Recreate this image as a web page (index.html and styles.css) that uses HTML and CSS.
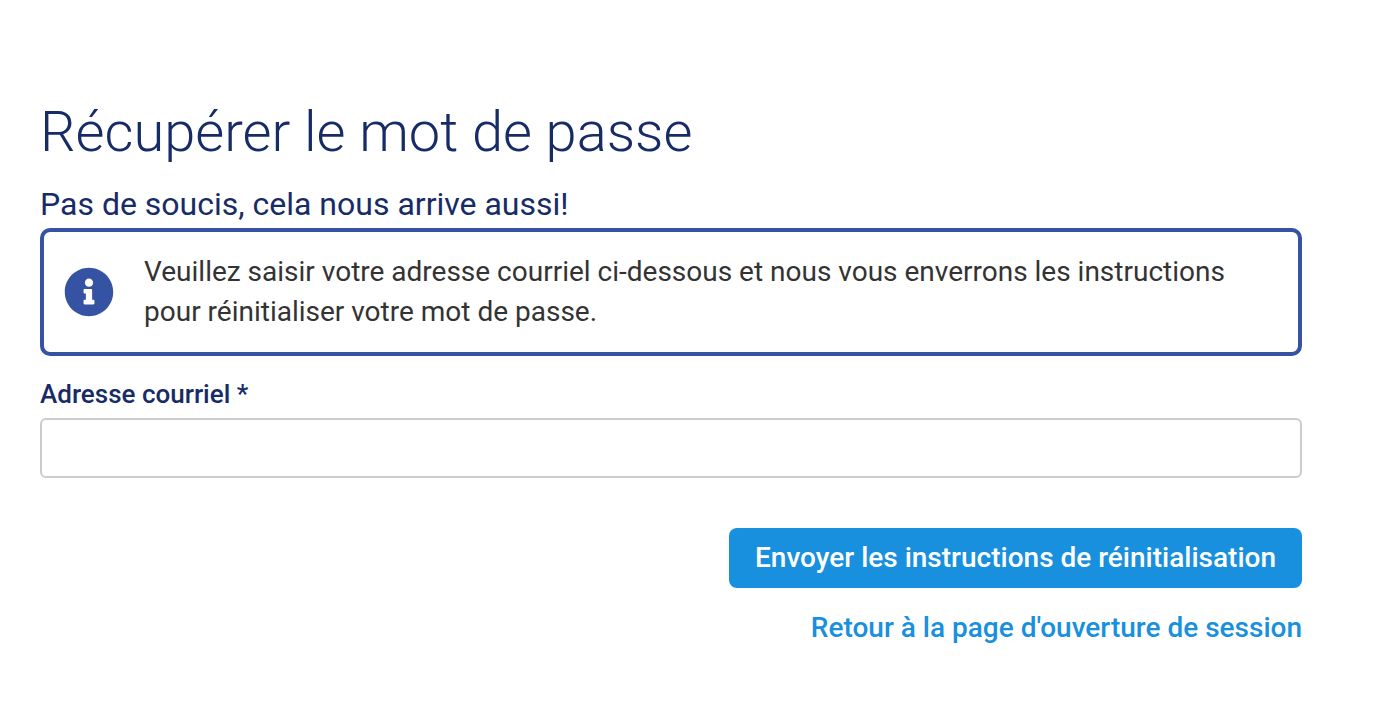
FILE: index.html
```html
<!DOCTYPE html>
<html lang="fr">
<head>
    <meta charset="UTF-8">
    <meta name="viewport" content="width=device-width, initial-scale=1.0">
    <title>Récupérer le mot de passe</title>
    <link rel="stylesheet" href="styles.css">
</head>
<body>

    <main class="container">
        <h1>Récupérer le mot de passe</h1>
        <h2>Pas de soucis, cela nous arrive aussi!</h2>

        <div class="info-box">
            <svg class="info-icon" viewBox="0 0 512 512" aria-hidden="true">
                <path fill="currentColor" d="M256 8C119 8 8 119 8 256s111 248 248 248 248-111 248-248S393 8 256 8zm0 110c23 0 42 19 42 42s-19 42-42 42-42-19-42-42 19-42 42-42zm56 254c0 7-5 12-12 12h-88c-7 0-12-5-12-12v-24c0-7 5-12 12-12h12v-64h-12c-7 0-12-5-12-12v-24c0-7 5-12 12-12h64c7 0 12 5 12 12v100h12c7 0 12 5 12 12v24z"/>
            </svg>
            <p>Veuillez saisir votre adresse courriel ci-dessous et nous vous enverrons les instructions pour réinitialiser votre mot de passe.</p>
        </div>

        <form class="recovery-form">
            <label for="email">Adresse courriel *</label>
            <input type="email" id="email" name="email" required>
            <button type="submit">Envoyer les instructions de réinitialisation</button>
            <a href="#">Retour à la page d'ouverture de session</a>
        </form>
    </main>

</body>
</html>
```
FILE: styles.css
```css
* {
    box-sizing: border-box;
}

body {
    font-family: Roboto, sans-serif;
    background: #fff;
    color: #333;
    margin: 0;
}

.container {
    padding: 96px 72px 72px 40px;
}

h1 {
    font-size: 56px;
    font-weight: 300;
    line-height: 72px;
    color: #172b66;
    margin: 0 0 16px;
}

h2 {
    font-size: 32px;
    font-weight: 400;
    line-height: 40px;
    color: #172b66;
    margin: 0 0 4px;
}

.info-box {
    display: flex;
    align-items: center;
    gap: 30px;
    padding: 20px 64px 20px 20px;
    border: 4px solid #3653a3;
    border-radius: 10px;
}

.info-icon {
    flex: none;
    width: 50px;
    height: 50px;
    color: #3653a3;
}

.info-box p {
    font-size: 28px;
    line-height: 40px;
    margin: 0;
}

.recovery-form {
    display: flex;
    flex-direction: column;
    align-items: flex-end;
}

label {
    align-self: flex-start;
    font-size: 26px;
    font-weight: 500;
    line-height: 32px;
    color: #172b66;
    margin: 22px 0 8px;
}

input {
    width: 100%;
    height: 60px;
    padding: 8px 16px;
    font-family: inherit;
    font-size: 28px;
    color: #333;
    background: #fff;
    border: 2px solid #ccc;
    border-radius: 6px;
    margin-bottom: 50px;
}

button {
    min-height: 60px;
    padding: 8px 26px;
    font-family: inherit;
    font-size: 28px;
    font-weight: 500;
    line-height: 40px;
    color: #fff;
    background: #1890de;
    border: none;
    border-radius: 8px;
    cursor: pointer;
    margin-bottom: 20px;
}

button:hover {
    background: #1279bd;
}

a {
    font-size: 28px;
    font-weight: 500;
    line-height: 40px;
    color: #1890de;
    text-decoration: none;
}

a:hover {
    text-decoration: underline;
}
```
